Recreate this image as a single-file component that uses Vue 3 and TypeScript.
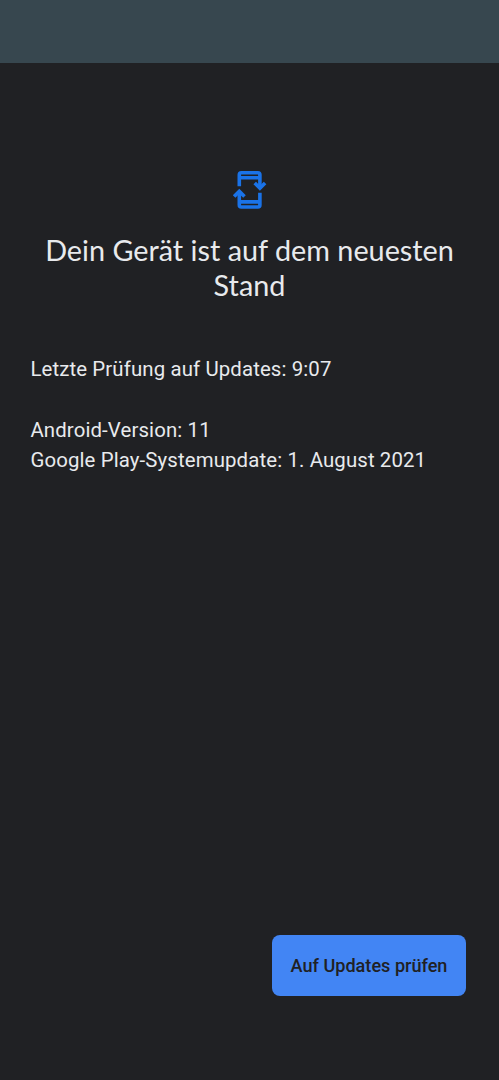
<script setup lang="ts">
const titleLines: string[] = ['Dein Gerät ist auf dem neuesten', 'Stand']
const lastCheck = 'Letzte Prüfung auf Updates: 9:07'
const versions: string[] = ['Android-Version: 11', 'Google Play-Systemupdate: 1. August 2021']
</script>

<template>
  <div class="screen">
    <div class="status-bar"></div>
    <main class="content">
      <svg class="icon" viewBox="0.3 0 40 40" fill="none" stroke="#1a73e8" stroke-width="3.6">
        <path d="M9.6 16.3V4.7Q9.6 2.7 11.6 2.7H28.2Q30.2 2.7 30.2 4.7V18.5M9.6 7.7H30.2M30.2 22.7V35Q30.2 37 28.2 37H11.6Q9.6 37 9.6 35V21.5M9.6 31.9H30.2" />
        <path d="M25 12.9L30.2 18.1L35.4 12.9M4.4 26.6L9.6 21.4L14.8 26.6" />
      </svg>
      <h1 class="title">
        <span v-for="line in titleLines" :key="line">{{ line }}</span>
      </h1>
      <div class="details">
        <p>{{ lastCheck }}</p>
        <div class="versions">
          <p v-for="v in versions" :key="v">{{ v }}</p>
        </div>
      </div>
    </main>
    <footer class="footer">
      <button class="check" type="button"><span>Auf Updates prüfen</span></button>
    </footer>
  </div>
</template>

<style>
body { margin: 0; background: #202124; }
</style>

<style scoped>
.screen { height: 1080px; display: flex; flex-direction: column; background: #202124; color: #e8eaed; font-family: Roboto, sans-serif; }
.status-bar { height: 63px; background: #37474f; flex: none; }
.content { flex: 1; display: flex; flex-direction: column; padding-top: 107px; }
.icon { width: 40px; height: 40px; align-self: center; display: block; }
.title { margin: 23px 0 0; display: flex; flex-direction: column; align-items: center; font: 400 28.8px/35px Lato, sans-serif; white-space: nowrap; }
.details { margin: 51px 0 0 30.4px; font-size: 20.4px; line-height: 30px; letter-spacing: 0.12px; white-space: nowrap; }
.details p { margin: 0; }
.versions { margin-top: 31px; }
.footer { display: flex; justify-content: flex-end; padding: 0 33px 84px 0; }
.check { width: 194px; height: 61px; border: 0; border-radius: 8px; padding: 0; background: #4285f4; color: #202124; font: 500 18.1px Roboto, sans-serif; white-space: nowrap; }
</style>
